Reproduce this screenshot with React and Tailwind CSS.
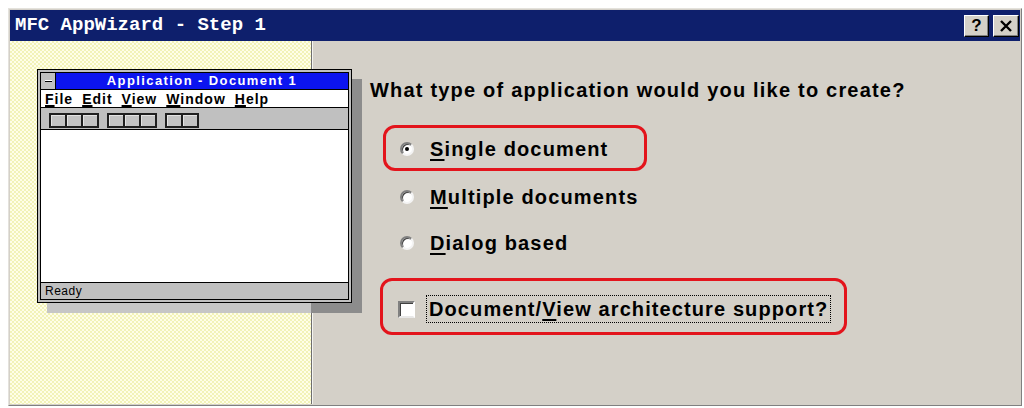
import React from "react";

function Radio({ checked }) {
  return (
    <span className="relative inline-block w-[14px] h-[14px] rounded-full bg-white border-2 border-t-[#808080] border-l-[#808080] border-r-[#f4f4f4] border-b-[#f4f4f4] shadow-[inset_1px_1px_0_#404040] shrink-0">
      {checked && (
        <span className="absolute left-[3px] top-[3px] w-[4px] h-[4px] rounded-full bg-black" />
      )}
    </span>
  );
}

function TbGroup({ n }) {
  return (
    <div className="flex">
      {Array.from({ length: n }).map((_, i) => (
        <div
          key={i}
          className={
            "w-[18px] h-[15px] border-2 border-[#202020] bg-[#c4c4c4] shadow-[inset_1px_1px_0_#e4e4e4] " +
            (i > 0 ? "-ml-[2px]" : "")
          }
        />
      ))}
    </div>
  );
}

export default function App() {
  const sans = { fontFamily: '"Liberation Sans", Arial, sans-serif' };
  return (
    <div className="w-[1024px] h-[408px] bg-white overflow-hidden relative">
      <div className="absolute left-[8px] top-[8px] w-[1014px] h-[398px] border border-[#e4e2dc] border-r-[#808080] border-b-[#808080] bg-[#d4d0c8] flex flex-col p-px">
        {/* title bar */}
        <div className="h-[31px] bg-[#0e1f6c] flex items-center justify-between pl-[5px] pr-[1px] shrink-0">
          <span
            className="text-white font-bold text-[19px] leading-none whitespace-pre"
            style={{ fontFamily: '"Liberation Mono", "Courier New", monospace' }}
          >
            MFC AppWizard - Step 1
          </span>
          <div className="flex gap-[4px] items-center">
            <div
              className="w-[25px] h-[22px] bg-[#d4d0c8] border border-t-white border-l-white border-r-black border-b-black shadow-[inset_-1px_-1px_0_#808080] flex items-center justify-center text-black font-bold text-[17px] leading-none"
              style={sans}
            >
              ?
            </div>
            <div className="w-[26px] h-[22px] bg-[#d4d0c8] border border-t-white border-l-white border-r-black border-b-black shadow-[inset_-1px_-1px_0_#808080] flex items-center justify-center">
              <svg width="14" height="12" viewBox="0 0 14 12">
                <path d="M2 1 L12 11 M12 1 L2 11" stroke="black" strokeWidth="2.4" />
              </svg>
            </div>
          </div>
        </div>

        {/* body */}
        <div className="relative flex flex-1 min-h-0">
          <div className="w-[301px] h-full bg-[repeating-conic-gradient(#f2f2b8_0%_25%,#fefee8_0%_50%)] bg-size-[4px_4px] shrink-0" />
          <div className="w-px h-full bg-[#6e6e6e] shrink-0" />
          <div className="w-px h-full bg-[#f4f4f0] shrink-0" />
          <div className="flex-1 h-full bg-[#d4d0c8] flex flex-col pl-[57px] pt-[37px] text-black" style={sans}>
            <div className="h-[24px] flex items-center text-[20px] font-bold tracking-[1.2px] whitespace-nowrap">
              What type of application would you like to create?
            </div>

            <div className="mt-[23px] ml-[13px] w-[264px] h-[46px] border-[3px] border-[#e3141c] rounded-[12px] flex items-center pl-[14px] pt-[2px]">
              <Radio checked />
              <span className="ml-[16px] text-[20px] font-bold tracking-[1.15px] whitespace-nowrap">
                <span className="underline decoration-[2px] underline-offset-[3px]">S</span>ingle document
              </span>
            </div>

            <div className="mt-[14px] ml-[30px] h-[24px] flex items-center">
              <Radio />
              <span className="ml-[16px] text-[20px] font-bold tracking-[1.15px] whitespace-nowrap">
                <span className="underline decoration-[2px] underline-offset-[3px]">M</span>ultiple documents
              </span>
            </div>

            <div className="mt-[22px] ml-[30px] h-[24px] flex items-center">
              <Radio />
              <span className="ml-[16px] text-[20px] font-bold tracking-[1.15px] whitespace-nowrap">
                <span className="underline decoration-[2px] underline-offset-[3px]">D</span>ialog based
              </span>
            </div>

            <div className="mt-[23px] ml-[10px] w-[467px] h-[57px] border-[3px] border-[#e3141c] rounded-[12px] flex items-center pl-[15px] pt-[5px]">
              <span className="w-[17px] h-[17px] bg-white border-2 border-t-[#808080] border-l-[#808080] border-r-white border-b-[#e8e8e8] shadow-[inset_1px_1px_0_#404040] shrink-0" />
              <span className="ml-[11px] px-[2px] py-[1px] border border-dotted border-black text-[20px] font-bold tracking-[1.1px] whitespace-nowrap leading-[24px]">
                Document/<span className="underline decoration-[2px] underline-offset-[3px]">V</span>iew architecture support?
              </span>
            </div>
          </div>

          {/* mini application window drawn over the picture */}
          <div className="absolute left-[37px] top-[38px] w-[315px] h-[234px] bg-[linear-gradient(to_right,#c6c6c6_264px,#8c8c8c_264px)]" />
          <div className="absolute left-[27px] top-[28px] w-[315px] h-[234px] border border-black bg-[#c0c0c0] p-[2px] flex">
            <div className="flex-1 border border-black flex flex-col bg-white">
              <div className="h-[16px] flex shrink-0">
                <div className="w-[15px] h-full bg-[#c0c0c0] border-r border-black flex items-center justify-center">
                  <div className="w-[7px] h-[2px] bg-black border-t border-white" />
                </div>
                <div
                  className="flex-1 bg-[#0c14ef] text-white font-bold text-[13px] leading-[16px] text-center tracking-[1.4px]"
                  style={sans}
                >
                  Application - Document 1
                </div>
              </div>
              <div className="h-px bg-black shrink-0" />
              <div
                className="h-[17px] bg-white flex items-center gap-[9px] pl-[4px] text-[14px] font-bold leading-none text-black tracking-[1px] shrink-0"
                style={sans}
              >
                <span><span className="underline decoration-[2px]">F</span>ile</span>
                <span><span className="underline decoration-[2px]">E</span>dit</span>
                <span><span className="underline decoration-[2px]">V</span>iew</span>
                <span><span className="underline decoration-[2px]">W</span>indow</span>
                <span><span className="underline decoration-[2px]">H</span>elp</span>
              </div>
              <div className="h-px bg-black shrink-0" />
              <div className="h-[21px] bg-[#c0c0c0] flex items-start pt-[5px] pl-[8px] gap-[8px] shrink-0">
                <TbGroup n={3} />
                <TbGroup n={3} />
                <TbGroup n={2} />
              </div>
              <div className="h-px bg-black shrink-0" />
              <div className="flex-1 bg-white" />
              <div className="h-px bg-black shrink-0" />
              <div
                className="h-[16px] bg-[#c0c0c0] pl-[4px] text-[12px] leading-[16px] text-black tracking-[0.5px] shrink-0"
                style={sans}
              >
                Ready
              </div>
            </div>
          </div>
        </div>
      </div>
    </div>
  );
}
